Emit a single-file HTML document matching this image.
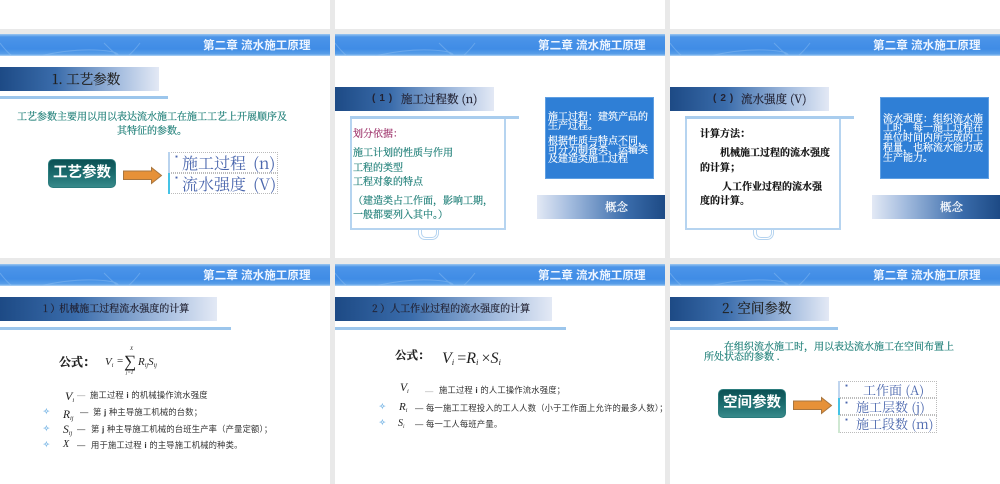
<!DOCTYPE html>
<html lang="zh"><head><meta charset="utf-8">
<style>
*{box-sizing:border-box;margin:0;padding:0}
html,body{width:1000px;height:484px;overflow:hidden;background:#e9e9e9}
body{font-family:"Liberation Sans","Noto Sans CJK SC",sans-serif;position:relative}
#w{position:absolute;left:0;top:0;width:1000px;height:484px;filter:blur(.3px)}
.top{position:absolute;top:0;height:29px;width:330px;background:#fff}
.s{position:absolute;width:330px;background:#fff;overflow:hidden}
.r1{top:34px;height:224px}.r2{top:264px;height:220px}
.h{position:absolute;left:0;top:0;width:330px;height:22px;background:linear-gradient(180deg,#9cc6f0 0,#4b94e8 3px,#3f8ce6 15px,#5a9fe8 20px,#b5d5f5 22px)}
.h svg{position:absolute;left:0;top:0}
.h b{position:absolute;left:203px;top:3px;font-size:11.6px;line-height:18px;color:#eef5ff;white-space:nowrap}
.t{position:absolute;white-space:nowrap}
.tb{position:absolute;left:0;top:33px;height:24px;background:linear-gradient(90deg,#1d4a85 0,#3a6cab 35%,#a5bddf 75%,#e3e9f5 100%)}
.ul{position:absolute;left:0;top:63px;height:3px;background:#9cc6ec}
.sf{font-family:"Noto Serif CJK SC",serif;-webkit-text-stroke:.2px currentColor}
.box{position:absolute;left:15px;top:83px;width:156px;height:113px;border:2px solid #b6d4f0;background:#fff}
.ul2{position:absolute;left:15px;top:82px;width:169px;height:3px;background:#a9cdee}
.loop{position:absolute;left:83px;top:196px;width:21px;height:10px;border:1.5px solid #b6d4f0;border-top:0;border-radius:0 0 7px 7px}
.loop:after{content:"";position:absolute;left:2px;top:0;width:14px;height:7px;border:1px solid #b6d4f0;border-top:0;border-radius:0 0 5px 5px}
.blue{position:absolute;left:210px;top:63px;width:109px;height:82px;background:#2f7fd6;border:1px solid #5f9fe2}
.gn{position:absolute;left:202px;top:161px;width:128px;height:24px;background:linear-gradient(90deg,#e3e9f5 0,#a5bddf 25%,#3a6cab 70%,#1d4a85 100%)}
.bt{color:#fff;font-size:10px;line-height:10px;font-family:"Noto Serif CJK SC",serif;-webkit-text-stroke:.2px #fff}
.btn{position:absolute;width:68px;height:29px;border-radius:5px;background:linear-gradient(180deg,#0d5054 0,#1c6e70 55%,#37898a 100%);border:1px solid #2b7c7d;color:#fff;font-weight:bold;text-align:center}
.row{position:absolute;border:1px dotted #bbb;background:#fff;color:#4a66ad;font-family:"Noto Serif CJK SC",serif;white-space:nowrap}
.row i{position:absolute;left:-1px;top:-1px;bottom:-1px;width:2px}
.row u{position:absolute;left:4px;top:0;font-size:7px;line-height:8px;text-decoration:none;color:#4a66ad}
.tc{color:#1f7f78}
.d{font-size:8.3px;line-height:12px;color:#333;letter-spacing:.18px}
.m{font-family:"Liberation Serif",serif;font-style:italic;color:#222;line-height:14px}
.m sub{font-size:55%;vertical-align:-2px;line-height:0}
.bl{color:#7db8e6;font-size:8px;line-height:10px;-webkit-text-stroke:.3px #7db8e6}
</style></head><body>
<div id="w">
<div class="top" style="left:0"></div><div class="top" style="left:335px"></div><div class="top" style="left:670px"></div>

<!-- slide 1 -->
<div class="s r1" style="left:0">
<div class="h"><svg width="330" height="22" fill="none" stroke="#9cc7f2" stroke-width="1" opacity=".4"><path d="M0 9Q6 17 12 22M40 22Q70 15 95 16T118 22M104 9Q112 17 118 22M140 9Q134 17 128 22"/></svg><b>第二章 流水施工原理</b></div>
<div class="tb" style="width:159px"></div>
<div class="t sf" style="left:52px;top:34px;font-size:13.5px;line-height:20px;color:#222">1. 工艺参数</div>
<div class="ul" style="top:62px;width:168px"></div>
<div class="t sf tc" style="left:17px;top:75px;font-size:10px;line-height:14px">工艺参数主要用以用以表达流水施工在施工工艺上开展顺序及</div>
<div class="t sf tc" style="left:117px;top:89px;font-size:10px;line-height:14px">其特征的参数。</div>
<div class="btn" style="left:48px;top:125px;font-size:14.5px;line-height:27px">工艺参数</div>
<svg style="position:absolute;left:122px;top:132px" width="42" height="20"><path d="M1.500 5H29.500V1.500L39.500 9.500L29.500 17.500V13.500H1.500Z" fill="#e69138" stroke="#a8763f"/></svg>
<div class="row" style="left:168px;top:118px;width:110px;height:21px;font-size:16px;line-height:19px;padding-left:13px;word-spacing:3px"><i style="background:#b9d3ee"></i><u>▪</u>施工过程 (n)</div>
<div class="row" style="left:168px;top:139px;width:110px;height:21px;font-size:16px;line-height:19px;padding-left:13px;word-spacing:3px"><i style="background:#45c3e6"></i><u>▪</u>流水强度 (V)</div>
</div>

<!-- slide 2 -->
<div class="s r1" style="left:335px">
<div class="h"><svg width="330" height="22" fill="none" stroke="#9cc7f2" stroke-width="1" opacity=".4"><path d="M0 9Q6 17 12 22M40 22Q70 15 95 16T118 22M104 9Q112 17 118 22M140 9Q134 17 128 22"/></svg><b>第二章 流水施工原理</b></div>
<div class="tb" style="top:53px;width:159px"></div>
<div class="t" style="left:37px;top:55px;font-size:10px;line-height:20px;color:#223;font-weight:bold;letter-spacing:4px">(1)</div>
<div class="t sf" style="left:66px;top:55px;font-size:11.500px;line-height:20px;color:#223">施工过程数 (n)</div>
<div class="loop"></div><div class="box"></div><div class="ul2"></div>
<div class="t sf" style="left:18px;top:92px;font-size:10px;line-height:14px;color:#a0386e">划分依据：</div>
<div class="t sf tc" style="left:18px;top:111px;font-size:10px;line-height:14px">施工计划的性质与作用</div>
<div class="t sf tc" style="left:18px;top:126px;font-size:10px;line-height:14px">工程的类型</div>
<div class="t sf tc" style="left:18px;top:140px;font-size:10px;line-height:14px">工程对象的特点</div>
<div class="t sf tc" style="left:18px;top:159px;font-size:10px;line-height:14px">（建造类占工作面，影响工期，</div>
<div class="t sf tc" style="left:18px;top:173px;font-size:10px;line-height:14px">一般都要列入其中。）</div>
<div class="blue"></div>
<div class="t bt" style="left:213px;top:77px">施工过程：建筑产品的</div>
<div class="t bt" style="left:213px;top:86px">生产过程。</div>
<div class="t bt" style="left:213px;top:101px">根据性质与特点不同，</div>
<div class="t bt" style="left:213px;top:110px">可分为制备类、运输类</div>
<div class="t bt" style="left:213px;top:119px">及建造类施工过程</div>
<div class="gn"></div>
<div class="t sf" style="left:270px;top:163px;font-size:11.500px;line-height:20px;color:#fff">概念</div>
</div>

<!-- slide 3 -->
<div class="s r1" style="left:670px">
<div class="h"><svg width="330" height="22" fill="none" stroke="#9cc7f2" stroke-width="1" opacity=".4"><path d="M0 9Q6 17 12 22M40 22Q70 15 95 16T118 22M104 9Q112 17 118 22M140 9Q134 17 128 22"/></svg><b>第二章 流水施工原理</b></div>
<div class="tb" style="top:53px;width:159px"></div>
<div class="t" style="left:43px;top:55px;font-size:10px;line-height:20px;color:#223;font-weight:bold;letter-spacing:4px">(2)</div>
<div class="t sf" style="left:71px;top:55px;font-size:11.500px;line-height:20px;color:#223">流水强度 (V)</div>
<div class="loop"></div><div class="box"></div><div class="ul2"></div>
<div class="t sf" style="left:30px;top:92px;font-size:10px;line-height:14px;color:#111;font-weight:bold">计算方法：</div>
<div class="t sf" style="left:50px;top:111px;font-size:10px;line-height:14px;color:#111;font-weight:bold">机械施工过程的流水强度</div>
<div class="t sf" style="left:30px;top:126px;font-size:10px;line-height:14px;color:#111;font-weight:bold">的计算；</div>
<div class="t sf" style="left:52px;top:145px;font-size:10px;line-height:14px;color:#111;font-weight:bold">人工作业过程的流水强</div>
<div class="t sf" style="left:30px;top:159px;font-size:10px;line-height:14px;color:#111;font-weight:bold">度的计算。</div>
<div class="blue"></div>
<div class="t bt" style="left:213px;top:79px">流水强度：组织流水施</div>
<div class="t bt" style="left:213px;top:88px">工时，每一施工过程在</div>
<div class="t bt" style="left:213px;top:98px">单位时间内所完成的工</div>
<div class="t bt" style="left:213px;top:108px">程量，也称流水能力或</div>
<div class="t bt" style="left:213px;top:118px">生产能力。</div>
<div class="gn"></div>
<div class="t sf" style="left:270px;top:163px;font-size:11.500px;line-height:20px;color:#fff">概念</div>
</div>

<!-- slide 4 -->
<div class="s r2" style="left:0">
<div class="h"><svg width="330" height="22" fill="none" stroke="#9cc7f2" stroke-width="1" opacity=".4"><path d="M0 9Q6 17 12 22M40 22Q70 15 95 16T118 22M104 9Q112 17 118 22M140 9Q134 17 128 22"/></svg><b>第二章 流水施工原理</b></div>
<div class="tb" style="width:217px"></div>
<div class="ul" style="width:231px"></div>
<div class="t sf" style="left:43px;top:37px;font-size:10px;line-height:14px;color:#223">1 ）<span style="margin-left:-1px">机械施工过程流水强度的计算</span></div>
<div class="t sf" style="left:59px;top:91px;font-size:12px;line-height:14px;color:#222;font-weight:bold">公式：</div>
<div class="t m" style="left:105px;top:91px;font-size:11px">V<sub>i</sub></div>
<div class="t m" style="left:117px;top:90px;font-size:11px;font-style:normal">=</div>
<div class="t m" style="left:124px;top:88px;font-size:17px;font-style:normal;line-height:20px">∑</div>
<div class="t m" style="left:130px;top:83px;font-size:5px;line-height:6px">X</div>
<div class="t m" style="left:126px;top:107px;font-size:5px;line-height:6px">j=1</div>
<div class="t m" style="left:138px;top:91px;font-size:11px">R<sub>ij</sub>S<sub>ij</sub></div>
<div class="t m" style="left:65px;top:125px;font-size:12px">V<sub>i</sub></div>
<div class="t d" style="left:77px;top:125px;color:#999">—</div>
<div class="t d" style="left:90px;top:125px">施工过程 <b>i</b> 的机械操作流水强度</div>
<div class="t bl" style="left:43px;top:143px">✧</div>
<div class="t m" style="left:63px;top:144px;font-size:11.500px">R<sub>ij</sub></div>
<div class="t d" style="left:80px;top:142px">—</div>
<div class="t d" style="left:93px;top:142px">第 <b>j</b> 种主导施工机械的台数；</div>
<div class="t bl" style="left:43px;top:160px">✧</div>
<div class="t m" style="left:63px;top:159px;font-size:11.500px">S<sub>ij</sub></div>
<div class="t d" style="left:77px;top:159px">—</div>
<div class="t d" style="left:91px;top:159px">第 <b>j</b> 种主导施工机械的台班生产率（产量定额）；</div>
<div class="t bl" style="left:43px;top:176px">✧</div>
<div class="t m" style="left:63px;top:174px;font-size:10px">X</div>
<div class="t d" style="left:77px;top:175px">—</div>
<div class="t d" style="left:91px;top:175px">用于施工过程 <b>i</b> 的主导施工机械的种类。</div>
</div>

<!-- slide 5 -->
<div class="s r2" style="left:335px">
<div class="h"><svg width="330" height="22" fill="none" stroke="#9cc7f2" stroke-width="1" opacity=".4"><path d="M0 9Q6 17 12 22M40 22Q70 15 95 16T118 22M104 9Q112 17 118 22M140 9Q134 17 128 22"/></svg><b>第二章 流水施工原理</b></div>
<div class="tb" style="width:217px"></div>
<div class="ul" style="width:231px"></div>
<div class="t sf" style="left:37px;top:37px;font-size:10px;line-height:14px;color:#223">2 ）<span>人工作业过程的流水强度的计算</span></div>
<div class="t sf" style="left:60px;top:84px;font-size:11.500px;line-height:14px;color:#222;font-weight:bold">公式：</div>
<div class="t m" style="left:107px;top:86px;font-size:16px;line-height:18px">V<sub>i</sub> <span style="font-style:normal;margin-left:-1px">=</span>R<sub>i</sub> <span style="font-style:normal;margin-left:-1px">×</span>S<sub>i</sub></div>
<div class="t m" style="left:65px;top:117px;font-size:11.500px">V<sub>i</sub></div>
<div class="t d" style="left:90px;top:121px;color:#aaa">—</div>
<div class="t d" style="left:104px;top:120px">施工过程 <b>i</b> 的人工操作流水强度；</div>
<div class="t bl" style="left:44px;top:138px">✧</div>
<div class="t m" style="left:64px;top:136px;font-size:11px">R<sub>i</sub></div>
<div class="t d" style="left:80px;top:138px">—</div>
<div class="t d" style="left:91px;top:138px">每一施工工程投入的工人人数（小于工作面上允许的最多人数）；</div>
<div class="t bl" style="left:44px;top:154px">✧</div>
<div class="t m" style="left:63px;top:153px;font-size:10px">S<sub>i</sub></div>
<div class="t d" style="left:80px;top:154px">—</div>
<div class="t d" style="left:91px;top:154px">每一工人每班产量。</div>
</div>

<!-- slide 6 -->
<div class="s r2" style="left:670px">
<div class="h"><svg width="330" height="22" fill="none" stroke="#9cc7f2" stroke-width="1" opacity=".4"><path d="M0 9Q6 17 12 22M40 22Q70 15 95 16T118 22M104 9Q112 17 118 22M140 9Q134 17 128 22"/></svg><b>第二章 流水施工原理</b></div>
<div class="tb" style="width:159px"></div>
<div class="ul" style="width:168px"></div>
<div class="t sf" style="left:52px;top:33px;font-size:13.500px;line-height:20px;color:#222">2. 空间参数</div>
<div class="t sf tc" style="left:54px;top:77px;font-size:10px;line-height:10px">在组织流水施工时，用以表达流水施工在空间布置上</div>
<div class="t sf tc" style="left:34px;top:87px;font-size:10px;line-height:10px">所处状态的参数 .</div>
<div class="btn" style="left:48px;top:125px;font-size:14.500px;line-height:27px">空间参数</div>
<svg style="position:absolute;left:122px;top:132px" width="42" height="20"><path d="M1.500 5H29.500V1.500L39.500 9.500L29.500 17.500V13.500H1.500Z" fill="#e69138" stroke="#a8763f"/></svg>
<div class="row" style="left:168px;top:117px;width:99px;height:17px;font-size:13px;line-height:15px;padding-left:24px"><i style="background:#c0d5ee"></i><u>▪</u>工作面 (A)</div>
<div class="row" style="left:168px;top:134px;width:99px;height:17px;font-size:13px;line-height:15px;padding-left:17px"><i style="background:#45c3e6"></i><u>▪</u>施工层数 (j)</div>
<div class="row" style="left:168px;top:151px;width:99px;height:18px;font-size:13px;line-height:16px;padding-left:17px"><i style="background:#cfe8d2"></i><u>▪</u>施工段数 (m)</div>
</div>
</div>
</body></html>
